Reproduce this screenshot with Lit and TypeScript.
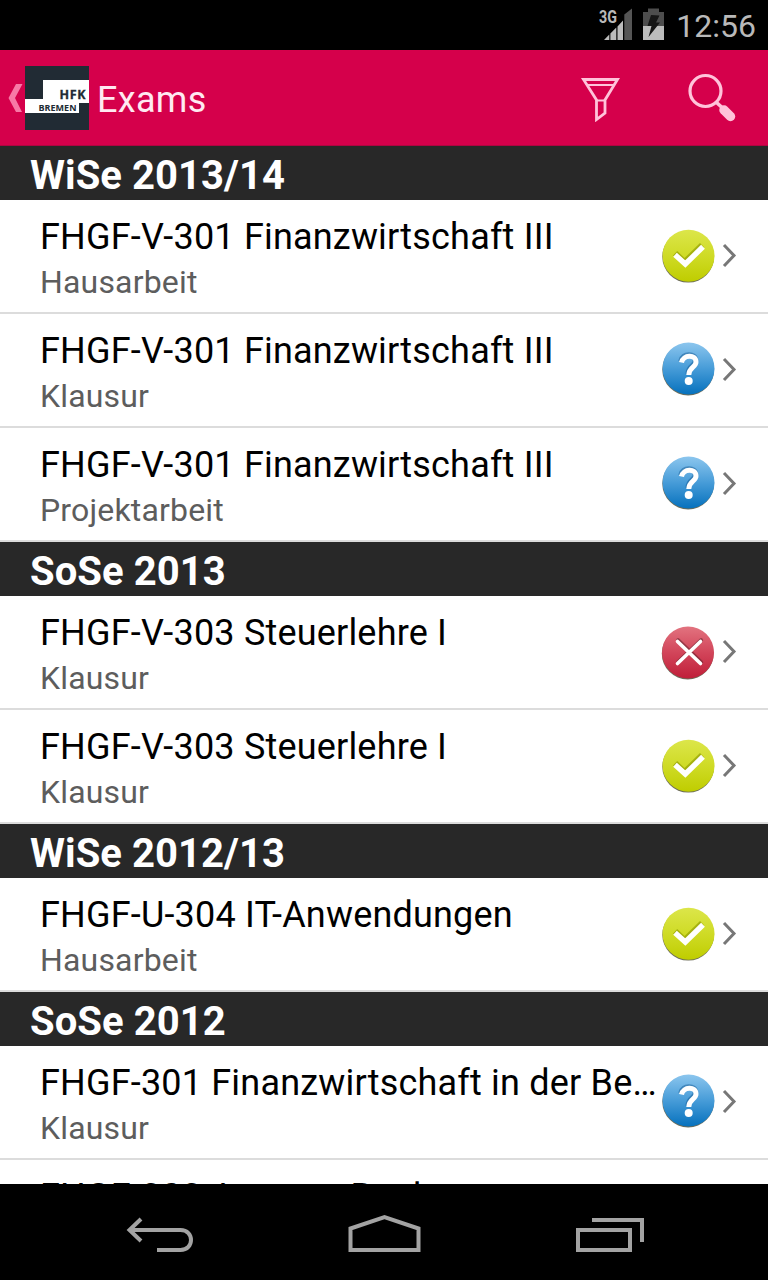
import { LitElement, html, css, svg } from "lit";
import { customElement, property } from "lit/decorators.js";

type Status = "passed" | "open" | "failed";
interface Exam { name: string; kind: string; status: Status; }
interface Term { label: string; exams: Exam[]; }

const TERMS: Term[] = [
  { label: "WiSe 2013/14", exams: [
    { name: "FHGF-V-301 Finanzwirtschaft III", kind: "Hausarbeit", status: "passed" },
    { name: "FHGF-V-301 Finanzwirtschaft III", kind: "Klausur", status: "open" },
    { name: "FHGF-V-301 Finanzwirtschaft III", kind: "Projektarbeit", status: "open" },
  ] },
  { label: "SoSe 2013", exams: [
    { name: "FHGF-V-303 Steuerlehre I", kind: "Klausur", status: "failed" },
    { name: "FHGF-V-303 Steuerlehre I", kind: "Klausur", status: "passed" },
  ] },
  { label: "WiSe 2012/13", exams: [
    { name: "FHGF-U-304 IT-Anwendungen", kind: "Hausarbeit", status: "passed" },
  ] },
  { label: "SoSe 2012", exams: [
    { name: "FHGF-301 Finanzwirtschaft in der Be…", kind: "Klausur", status: "open" },
    { name: "FHGF-303 Aussen. Bank", kind: "", status: "open" },
  ] },
];

@customElement("status-badge")
class StatusBadge extends LitElement {
  @property() status: Status = "open";
  static styles = css`
    :host { display: block; width: 56px; height: 58px; }
    svg { display: block; }
  `;
  private mark() {
    switch (this.status) {
      case "passed":
        return svg`<path d="M15.500 28l9.500 9L42.500 20" fill="none" stroke="#8d9a00" stroke-opacity=".65" stroke-width="6" transform="translate(-.4 -1.800)"/>
          <path d="M15 27.800l10.300 9.200L43 19.800" fill="none" stroke="#fff" stroke-width="5.400"/>`;
      case "failed":
        return svg`<path d="M17.500 18.500L40.500 40.500M40.500 18.500L17.500 40.500" stroke="#6b2530" stroke-opacity=".6" stroke-width="4" stroke-linecap="round" transform="translate(.6 -1.300)"/>
          <path d="M17.500 18.500L40.500 40.500M40.500 18.500L17.500 40.500" stroke="#fff" stroke-width="3.600" stroke-linecap="round"/>`;
      default:
        return svg`<path d="M21.500 21.500C23 13.500 36 13 36 21C36 26.500 28.800 26 28.800 34" fill="none" stroke="#0c5089" stroke-opacity=".45" stroke-width="5.600" transform="translate(-.5 -1.300)"/>
          <path d="M21.500 21.500C23 13.500 36 13 36 21C36 26.500 28.800 26 28.800 34" fill="none" stroke="#fff" stroke-width="5"/>
          <circle cx="28.700" cy="40" r="4" fill="#fff"/>`;
    }
  }
  render() {
    const [top, mid, low] = {
      passed: ["#dce64a", "#cfdb26", "#bfcd00"],
      open: ["#8cc6ee", "#479cd8", "#0671bd"],
      failed: ["#e2737f", "#d2455a", "#c01f39"],
    }[this.status];
    const cy = { passed: 28.700, open: 27.500, failed: 29.500 }[this.status];
    const cx = this.status === "failed" ? 28 : 28.500;
    return html`<svg width="56" height="58" viewBox="0 0 56 58">
      <defs>
        <linearGradient id="g" x1="0" y1="0" x2="0" y2="1">
          <stop offset="0" stop-color=${top}/><stop offset=".5" stop-color=${mid}/><stop offset="1" stop-color=${low}/>
        </linearGradient>
        <filter id="s" x="-10%" y="-10%" width="120%" height="125%"><feGaussianBlur stdDeviation=".7"/></filter>
      </defs>
      <circle cx=${cx - 0.3} cy=${cy + 1} r="25.900" fill="#3a3a20" fill-opacity=".75" filter="url(#s)"/>
      <circle cx=${cx} cy=${cy} r="26" fill="url(#g)"/>
      ${this.mark()}
    </svg>`;
  }
}

@customElement("exam-row")
class ExamRow extends LitElement {
  @property({ attribute: false }) exam!: Exam;
  static styles = css`
    :host { display: flex; box-sizing: border-box; height: 114px; flex: none; align-items: center;
      padding: 0 30px 0 40px; border-bottom: 2px solid #dcdcdc; background: #fff; }
    .text { width: 616px; height: 112px; flex: none; box-sizing: border-box; padding-top: 15px; }
    .name { font-size: 36px; line-height: 44px; color: #000; letter-spacing: .19px; white-space: nowrap; }
    .kind { font-size: 32px; line-height: 38px; padding-top: 4px; color: #5d5d5d; letter-spacing: .17px; white-space: nowrap; }
    status-badge { margin-left: 4px; }
    .more { margin-left: 6px; }
  `;
  render() {
    return html`
      <div class="text"><div class="name">${this.exam.name}</div><div class="kind">${this.exam.kind}</div></div>
      <status-badge .status=${this.exam.status}></status-badge>
      <svg class="more" width="16" height="26" viewBox="0 0 16 26"><path d="M2 2L12 12.500L2 23" fill="none" stroke="#777" stroke-width="3"/></svg>`;
  }
}

@customElement("app-root")
class AppRoot extends LitElement {
  static styles = css`
    :host { display: flex; flex-direction: column; width: 768px; height: 1280px; overflow: hidden;
      background: #000; font-family: Roboto, sans-serif; }
    .status { display: flex; height: 50px; flex: none; align-items: center; justify-content: flex-end;
      box-sizing: border-box; padding-right: 12px; color: #b9b9b9; }
    .clock { font-size: 32px; line-height: 50px; padding-top: 1px; margin-left: 10px; }
    .bar { display: flex; align-items: center; height: 96px; flex: none; box-sizing: border-box;
      padding: 0 31px 0 8px; background: #d5004b; border-bottom: 1px solid #ae0640; }
    .up { margin-right: 2px; }
    .title { flex: 1; font-size: 36px; line-height: 44px; padding-left: 8px; padding-top: 5px; letter-spacing: .3px; color: #ffe9f1; }
    .search { margin-left: 65px; }
    .list { flex: 1; min-height: 0; overflow: hidden; display: flex; flex-direction: column; }
    .term { height: 54px; flex: none; box-sizing: border-box; padding: 5px 0 0 30px; background: #282828;
      color: #fff; font-size: 40px; font-weight: 700; line-height: 49px; letter-spacing: .05px; }
    .nav { display: flex; height: 96px; flex: none; align-items: center; justify-content: space-between;
      box-sizing: border-box; padding: 4px 123px 0 126px; }
    svg { display: block; flex: none; }
    .logo { font-family: "Open Sans", sans-serif; font-weight: 700; }
  `;
  render() {
    return html`
      <div class="status">
        <svg width="68" height="50" viewBox="0 0 68 50">
          <text x="1" y="23" font-size="17.500" font-weight="700" textLength="18" lengthAdjust="spacingAndGlyphs" fill="#b9b9b9">3G</text>
          <path d="M6 40L11.300 34.500V40zM12.400 33.500L18.300 27.500V40H12.400zM19.500 26.500L25 20.500V40H19.500z" fill="#bcbcbc"/>
          <path d="M26.300 14.500L34 8.500V40H26.300z" fill="#555"/>
          <path d="M45 12H50V8.500H61V12H66V26H45z" fill="#4d4d4d"/><path d="M45 26H66V40H45z" fill="#bcbcbc"/>
          <path d="M53 15L61.500 15.500L58 22.500H62L50.500 37L53.500 26H49.500z" fill="#161616"/>
        </svg>
        <div class="clock">12:56</div>
      </div>
      <div class="bar">
        <svg class="up" width="15" height="32" viewBox="0 0 15 32"><path d="M8 2H14.500L7 16L14 30H8L.5 16z" fill="#f779a6"/></svg>
        <svg class="logo" width="64" height="64" viewBox="0 0 64 64">
          <path d="M0 0H64V64H0z" fill="#212b34"/><path d="M18 14H64V37H54V47H0V33H18z" fill="#fff"/>
          <text x="34.500" y="33" font-size="12.500" textLength="26" stroke="#212b34" stroke-width=".3" fill="#212b34">HFK</text>
          <text x="13.500" y="44.700" font-size="9" textLength="38" fill="#212b34">BREMEN</text>
        </svg>
        <div class="title">Exams</div>
        <svg width="42" height="48" viewBox="0 0 42 48"><g fill="none" stroke="#ffc3da" stroke-width="2.800" stroke-linejoin="miter"><path d="M3.500 5.500H37.500L25 26V39L16.500 45.500V26z"/><path d="M6 11H35M16.500 26.500H25" stroke-width="2"/></g></svg>
        <svg class="search" width="50" height="50" viewBox="0 0 50 50"><circle cx="18.500" cy="18" r="15.500" fill="none" stroke="#ffc3da" stroke-width="3.200"/><path d="M29 29L35 34.500" stroke="#ffc3da" stroke-width="3.600"/><path d="M37 37L43.500 43.500" stroke="#ffc3da" stroke-width="9.500" stroke-linecap="round"/></svg>
      </div>
      <div class="list">
        ${TERMS.map((t) => html`<div class="term">${t.label}</div>
          ${t.exams.map((e) => html`<exam-row .exam=${e}></exam-row>`)}`)}
      </div>
      <div class="nav">
        <svg width="68" height="40" viewBox="0 0 68 40"><path d="M31 36H54.500C68.500 36 68.500 16 54.500 16H4M15 5L3.500 16L15 27" fill="none" stroke="#a3a3a3" stroke-width="4"/></svg>
        <svg width="74" height="40" viewBox="0 0 74 40"><path d="M2.500 36V14.500L36.500 3L70.500 14.500V36z" fill="none" stroke="#a3a3a3" stroke-width="4"/></svg>
        <svg width="70" height="40" viewBox="0 0 70 40"><path d="M3 16H55V36H3zM17 6H67V28" fill="none" stroke="#a3a3a3" stroke-width="4"/></svg>
      </div>`;
  }
}
